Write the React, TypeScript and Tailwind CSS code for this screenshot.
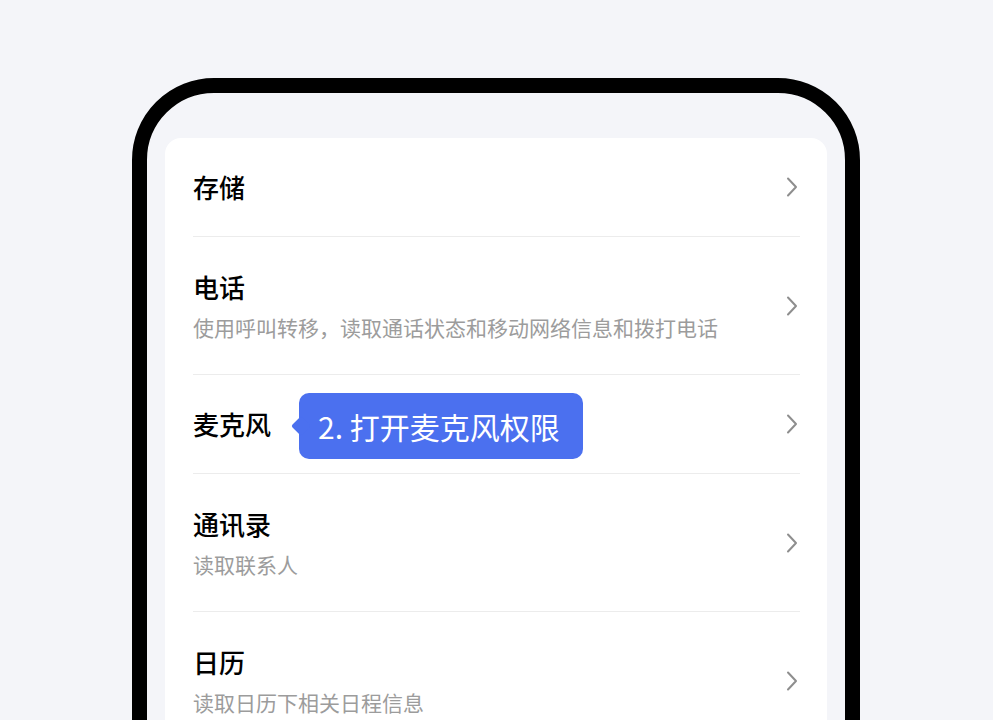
type Item = {
  title: string;
  desc?: string;
  tip?: string;
};

const items: Item[] = [
  { title: '存储' },
  { title: '电话', desc: '使用呼叫转移，读取通话状态和移动网络信息和拨打电话' },
  { title: '麦克风', tip: '2. 打开麦克风权限' },
  { title: '通讯录', desc: '读取联系人' },
  { title: '日历', desc: '读取日历下相关日程信息' },
];

function Chevron() {
  return (
    <svg width="12" height="20" viewBox="0 0 12 20" fill="none" className="shrink-0">
      <path d="M2 1.5L10 10L2 18.5" stroke="#8e8e8e" strokeWidth="2" strokeLinecap="round" strokeLinejoin="round" />
    </svg>
  );
}

function Row({ item, last }: { item: Item; last: boolean }) {
  return (
    <div className={last ? 'flex items-center' : 'flex items-center border-b border-[#ececec]'}>
      <div className={item.desc ? 'flex-1 pt-[33px] pb-[32px]' : 'flex-1 py-[32px]'}>
        <div className="flex items-center">
          <span className="text-[26px] leading-[34px] font-medium text-black">{item.title}</span>
          {item.tip && (
            <div className="relative top-[2px] ml-[28px] my-[-16px] rounded-[10px] bg-[#4b70ef] pl-[19px] pr-[23px] py-[14px]">
              <span className="absolute left-[-5px] top-1/2 h-[14px] w-[14px] -translate-y-1/2 rotate-45 rounded-[2px] bg-[#4b70ef]" />
              <span className="relative text-[30px] leading-[38px] text-white">{item.tip}</span>
            </div>
          )}
        </div>
        {item.desc && (
          <div className="mt-[8px] text-[21px] leading-[30px] text-[#9c9c9c]">{item.desc}</div>
        )}
      </div>
      <div className="mr-[2px]">
        <Chevron />
      </div>
    </div>
  );
}

export default function App() {
  return (
    <div
      className="h-[720px] w-full overflow-hidden bg-[#f4f5f9] pt-[78px]"
      style={{ fontFamily: '"Noto Sans CJK SC", "Liberation Sans", sans-serif' }}
    >
      <div className="ml-[132px] w-[728px] h-[800px] rounded-[82px] border-[15px] border-black bg-[#f4f5f9] px-[18px] pt-[45px]">
        <div className="rounded-[16px] bg-white pl-[28px] pr-[27px]">
          {items.map((item, i) => (
            <Row key={item.title} item={item} last={i === items.length - 1} />
          ))}
        </div>
      </div>
    </div>
  );
}
